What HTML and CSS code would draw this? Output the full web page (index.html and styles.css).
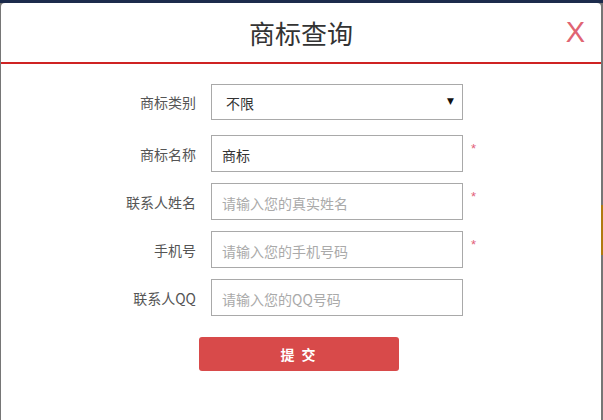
FILE: index.html
```html
<!DOCTYPE html>
<html lang="zh">
<head>
<meta charset="utf-8">
<link rel="stylesheet" href="styles.css">
</head>
<body>
<div class="modal">
  <div class="modal-head">
    <h1 class="modal-title">商标查询</h1>
    <span class="modal-close">X</span>
  </div>
  <form class="form">
    <div class="row row-first">
      <label class="label">商标类别</label>
      <div class="select">
        <span class="select-text">不限</span>
        <span class="select-arrow">▼</span>
      </div>
      <span class="req"></span>
    </div>
    <div class="row">
      <label class="label">商标名称</label>
      <input class="input" type="text" value="商标">
      <span class="req">*</span>
    </div>
    <div class="row">
      <label class="label">联系人姓名</label>
      <input class="input" type="text" placeholder="请输入您的真实姓名">
      <span class="req">*</span>
    </div>
    <div class="row">
      <label class="label">手机号</label>
      <input class="input" type="text" placeholder="请输入您的手机号码">
      <span class="req">*</span>
    </div>
    <div class="row">
      <label class="label">联系人QQ</label>
      <input class="input" type="text" placeholder="请输入您的QQ号码">
      <span class="req"></span>
    </div>
    <div class="actions">
      <button class="submit" type="button">提 交</button>
    </div>
  </form>
</div>
</body>
</html>
```

FILE: styles.css
```css
html, body {
  margin: 0;
  padding: 0;
  height: 420px;
  overflow: hidden;
}
body {
  font-family: "Noto Sans CJK SC", "Noto Sans", sans-serif;
  background:
    linear-gradient(to bottom, transparent 205px, #b07a10 205px, #b07a10 255px, transparent 255px) right top / 3px 420px no-repeat,
    linear-gradient(to bottom, #1c2b4c 0, #1c2b4c 3px, #767676 3px) ;
}
.modal {
  margin: 3px 2px 0 1px;
  height: 430px;
  background: #fff;
  border-radius: 4px 4px 0 0;
}
.modal-head {
  position: relative;
  height: 59px;
  border-bottom: 2px solid #cf2323;
  display: flex;
  align-items: center;
  justify-content: center;
}
.modal-title {
  margin: 0;
  font-size: 26px;
  font-weight: normal;
  color: #333;
  line-height: 1;
}
.modal-close {
  position: absolute;
  right: 16px;
  top: 13px;
  font-family: "Liberation Sans", sans-serif;
  font-size: 29px;
  color: #e06473;
  font-weight: normal;
}
.form {
  padding: 20px 0 0 0;
  display: flex;
  flex-direction: column;
  gap: 11px;
}
.row {
  display: grid;
  grid-template-columns: 195px 252px 20px;
  column-gap: 15px;
  align-items: center;
}
.row-first {
  margin-bottom: 4px;
}
.label {
  text-align: right;
  font-size: 14px;
  color: #555;
}
.select, .input {
  box-sizing: border-box;
  height: 37px;
  border: 1px solid #a9a9a9;
  background: #fff;
  font-family: inherit;
  font-size: 14px;
  color: #333;
}
.select {
  height: 36px;
  display: flex;
  align-items: center;
  justify-content: space-between;
  padding: 2px 8px 0 14px;
}
.select-arrow {
  font-size: 9px;
  color: #111;
  font-family: "DejaVu Sans", sans-serif;
  position: relative;
  top: -2px;
}
.input {
  width: 252px;
  padding: 2px 10px 0 10px;
  outline: none;
}
.input::placeholder {
  color: #aaa;
}
.req {
  margin-left: -7px;
  align-self: start;
  padding-top: 6px;
  color: #e2627a;
  font-size: 13px;
  font-family: "Liberation Sans", sans-serif;
}
.actions {
  display: flex;
  padding-left: 198px;
  margin-top: 10px;
}
.submit {
  width: 200px;
  height: 34px;
  border: none;
  border-radius: 3px;
  background: #d84a4a;
  color: #fff;
  font-family: inherit;
  font-size: 14px;
  font-weight: bold;
  letter-spacing: 2px;
}
```
